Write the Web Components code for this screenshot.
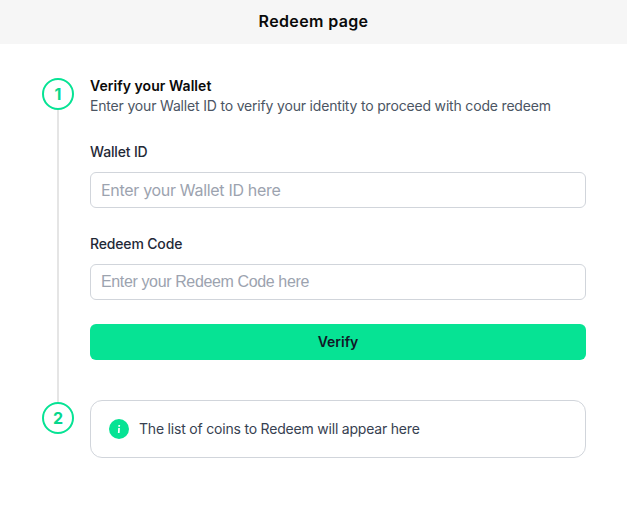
<!doctype html>
<html><head><meta charset="utf-8">
<style>
html,body{margin:0;padding:0;background:#fff;font-family:Inter,"Liberation Sans",sans-serif;}
</style></head><body>
<redeem-page></redeem-page>
<script>
function def(name,html){customElements.define(name,class extends HTMLElement{constructor(){super();this.attachShadow({mode:'open'}).innerHTML=html;}});}
def('page-header',`<style>:host{display:flex;height:44px;padding-bottom:2px;box-sizing:border-box;align-items:center;justify-content:center;background:#f6f6f6;color:#0a0a0a;font:600 16px/24px Inter,sans-serif;letter-spacing:.36px}</style><slot></slot>`);
def('step-row',`<style>
:host{display:grid;grid-template-columns:32px 1fr;column-gap:16px}
.mark{display:flex;flex-direction:column;align-items:center}
.c{box-sizing:border-box;width:32px;height:32px;border:2px solid #06e394;border-radius:50%;color:#06d78d;font:700 16px/28px Inter,sans-serif;text-align:center;flex:none}
.l{flex:1;width:2px;background:#e5e5e5;margin-bottom:-2px}
:host([last]) .l{display:none}
:host([last]) .c{margin-top:2px}
</style><div class="mark"><div class="c"><slot name="n"></slot></div><div class="l"></div></div><div><slot></slot></div>`);
def('text-field',`<style>
:host{display:block;margin-bottom:26px}
:host(:last-of-type){margin-bottom:24px}
label{display:block;font:500 14px/20px Inter,sans-serif;letter-spacing:-.16px;color:#1f2937;margin-bottom:10px}
input{display:block;box-sizing:border-box;width:100%;height:36px;border:1px solid #d1d5db;border-radius:6px;padding:0 10px;background:#fff;outline:none;font:var(--ff,400 16px Inter,sans-serif);letter-spacing:var(--ls,-.31px);color:#111827}
input::placeholder{color:#9ca3af;opacity:1}
</style><label></label><input>`);
def('verify-button',`<style>:host{display:flex;height:36px;align-items:center;justify-content:center;background:#06e394;border-radius:6px;color:#111827;font:600 14px/20px Inter,sans-serif}</style><slot></slot>`);
def('info-card',`<style>:host{display:flex;box-sizing:border-box;height:58px;align-items:center;gap:10px;padding:0 18px;border:1px solid #d1d5db;border-radius:12px;color:#374151;font:400 14px/20px Inter,sans-serif;letter-spacing:-.2px}svg{flex:none}</style>
<svg width="20" height="20" viewBox="0 0 20 20"><circle cx="10" cy="10" r="10" fill="#06e394"/><path d="M9.2 9h1.7l-.3 5H8.9zM9.4 6h1.7l-.1 1.8H9.3z" fill="#fff"/></svg><span><slot></slot></span>`);
def('redeem-page',`<style>
:host{display:block}
main{padding:34px 41px 0 42px}
h2{margin:-2px 0 0;font:600 14px/20px Inter,sans-serif;letter-spacing:.05px;color:#0a0a0a}
p{margin:0 0 26px;font:400 14px/20px Inter,sans-serif;letter-spacing:-.18px;color:#4b5563}
.gap{padding-bottom:40px}
</style>
<page-header>Redeem page</page-header>
<main>
<step-row><span slot="n">1</span><div class="gap">
<h2>Verify your Wallet</h2><p>Enter your Wallet ID to verify your identity to proceed with code redeem</p>
<text-field id="a"></text-field><text-field id="b" style="--ff:400 16px 'Liberation Sans',sans-serif;--ls:-.37px"></text-field>
<verify-button>Verify</verify-button></div></step-row>
<step-row last><span slot="n">2</span><info-card>The list of coins to Redeem will appear here</info-card></step-row>
</main>`);
const r=document.querySelector('redeem-page').shadowRoot;
[['a','Wallet ID','Enter your Wallet ID here'],['b','Redeem Code','Enter your Redeem Code here']].forEach(([i,l,p])=>{const s=r.getElementById(i).shadowRoot;s.querySelector('label').textContent=l;s.querySelector('input').placeholder=p;});
</script></body></html>
